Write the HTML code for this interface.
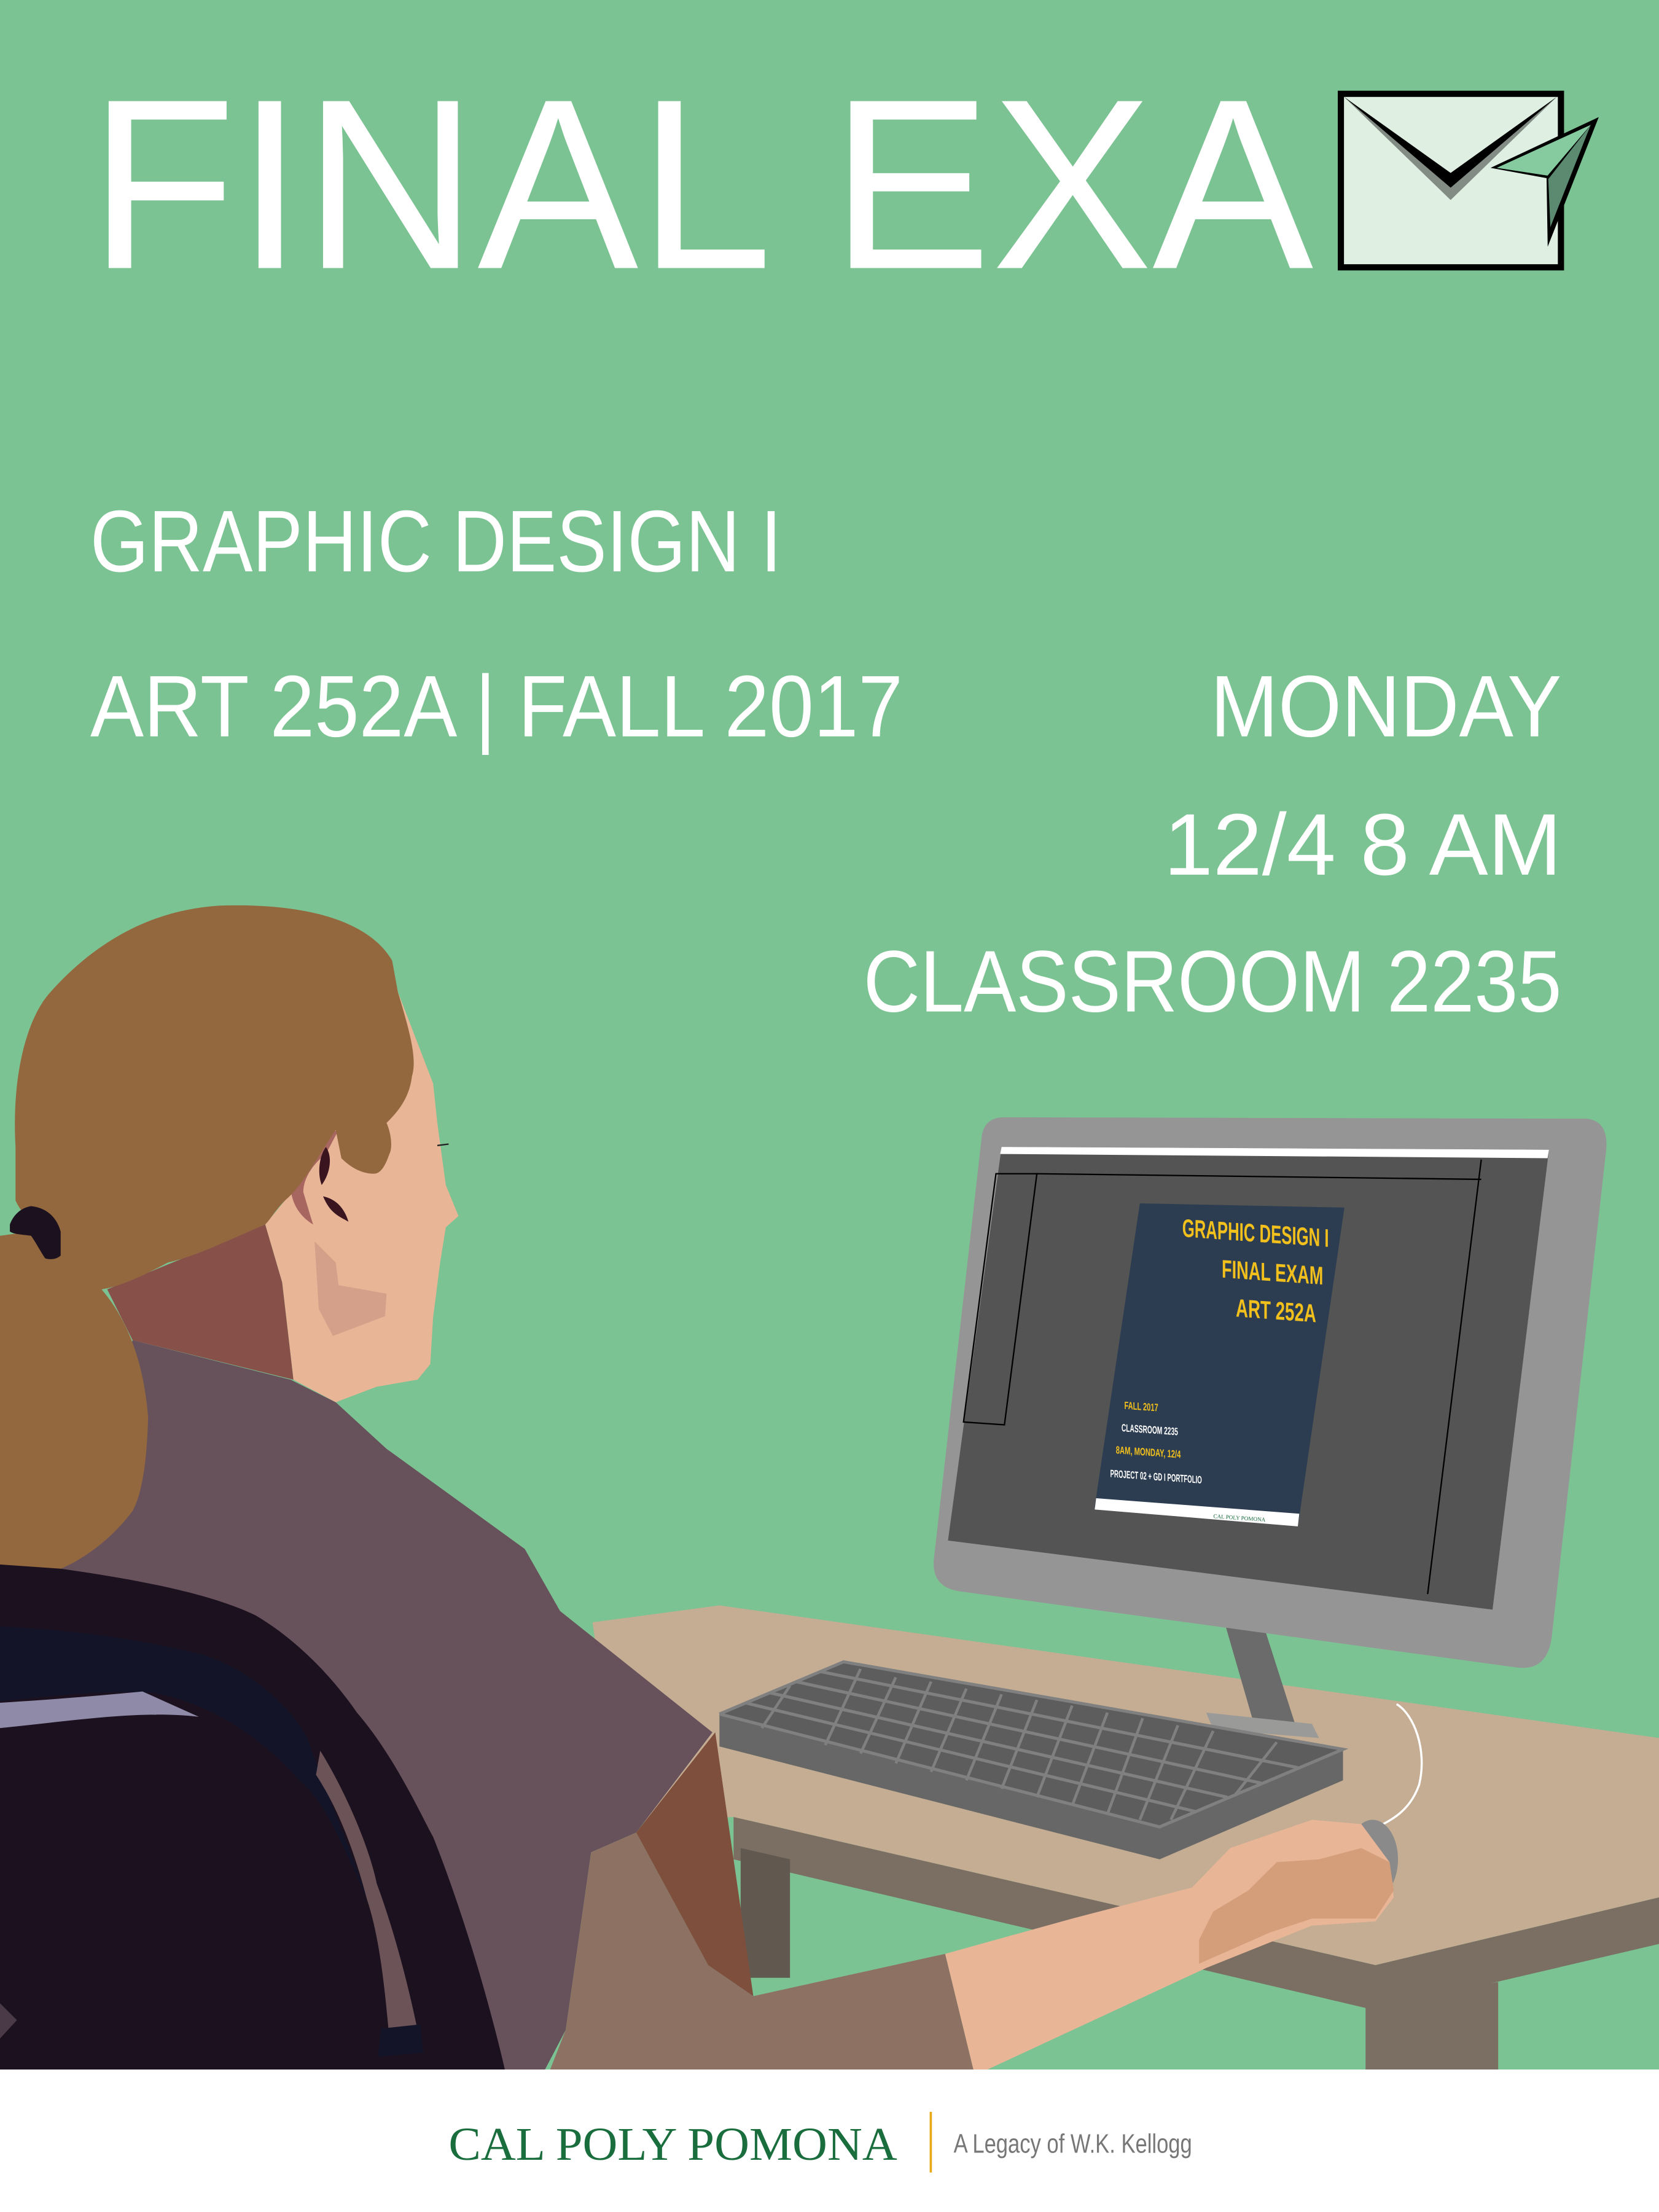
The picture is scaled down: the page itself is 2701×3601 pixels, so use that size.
<!DOCTYPE html>
<html><head><meta charset="utf-8"><style>
html,body{margin:0;padding:0;background:#7cc393;}
svg{display:block}
</style></head><body>
<svg width="2701" height="3601" viewBox="0 0 1176 1568" preserveAspectRatio="none" xmlns="http://www.w3.org/2000/svg">
<rect x="0" y="0" width="1176" height="1568" fill="#7cc393"/>

<!-- Headline -->
<text x="63" y="190" font-family="Liberation Sans, sans-serif" font-size="172" fill="#fff" textLength="868" lengthAdjust="spacingAndGlyphs">FINAL EXA</text>
<!-- Envelope -->
<rect x="950.5" y="66.5" width="156" height="123" fill="#dff0e2" stroke="#000" stroke-width="4.4"/>
<polygon points="952.6,68.5 1028.3,133.1 1103.7,68.5 1028.3,141.8" fill="#838c84"/>
<polygon points="952.6,68.5 1028.3,122.6 1103.7,68.5 1028.3,133.1" fill="#000"/>
<polygon points="1056.6,119 1133.3,83 1097.1,174.9 1096.3,126.3" fill="#000"/>
<polygon points="1061,119 1127.6,88.5 1097,124.5" fill="#86cba0"/>
<polygon points="1097.5,127 1127.6,88.5 1099,161" fill="#5b8a70"/>

<!-- Info text -->
<g font-family="Liberation Sans, sans-serif" fill="#fff" font-size="62">
<text x="64" y="405" textLength="490" lengthAdjust="spacingAndGlyphs">GRAPHIC DESIGN I</text>
<text x="64" y="522" textLength="576" lengthAdjust="spacingAndGlyphs">ART 252A | FALL 2017</text>
<text x="858" y="522" textLength="249" lengthAdjust="spacingAndGlyphs">MONDAY</text>
<text x="825" y="620" textLength="282" lengthAdjust="spacingAndGlyphs">12/4  8 AM</text>
<text x="612" y="717" textLength="495" lengthAdjust="spacingAndGlyphs">CLASSROOM 2235</text>
</g>

<!-- Desk -->
<polygon points="420,1150 510,1138 1176,1232 1176,1345 975,1393 520,1288 440,1292" fill="#c4ad93"/>
<polygon points="520,1288 975,1393 1176,1345 1176,1378 975,1425 520,1318" fill="#7b6e62"/>
<polygon points="525,1310 560,1318 560,1402 525,1402" fill="#615950"/>
<polygon points="968,1420 1062,1405 1062,1467 968,1467" fill="#7b6e62"/>

<!-- Monitor -->
<polygon points="868,1150 895,1150 918,1222 890,1226" fill="#6a6b6a"/>
<path d="M712,792 L1125,793 Q1142,795 1138,820 L1100,1160 Q1097,1185 1075,1182 L680,1128 Q660,1125 662,1105 L696,805 Q698,792 712,792 Z" fill="#959595"/>
<polygon points="710,813 1098,815 1058,1141 672,1092" fill="#535453"/>
<polygon points="710,813 1098,815 1097,821 709,818" fill="#fff"/>
<polyline points="735,832 1050,836" fill="none" stroke="#000" stroke-width="1"/>
<polyline points="1050,822 1012,1130" fill="none" stroke="#000" stroke-width="1"/>
<polygon points="706,832 735,832 712,1010 683,1008" fill="none" stroke="#000" stroke-width="1"/>
<!-- mini poster -->
<polygon points="808,853 953,856 920,1082 776,1068" fill="#2d3d51"/>
<polygon points="777,1062 921,1073 920,1082 776,1070" fill="#fff"/>
<g font-family="Liberation Sans Narrow, Liberation Sans, sans-serif" font-weight="bold" transform="skewY(4) translate(0,-62)">
<text x="942" y="880" font-size="18" fill="#f2c01c" text-anchor="end" textLength="104" lengthAdjust="spacingAndGlyphs">GRAPHIC DESIGN I</text>
<text x="938" y="907" font-size="18" fill="#f2c01c" text-anchor="end" textLength="72" lengthAdjust="spacingAndGlyphs">FINAL EXAM</text>
<text x="933" y="934" font-size="18" fill="#f2c01c" text-anchor="end" textLength="57" lengthAdjust="spacingAndGlyphs">ART 252A</text>
<text x="797" y="1005" font-size="7.5" fill="#f2c01c" textLength="24" lengthAdjust="spacingAndGlyphs">FALL 2017</text>
<text x="795" y="1021" font-size="7.5" fill="#fff" textLength="40" lengthAdjust="spacingAndGlyphs">CLASSROOM 2235</text>
<text x="791" y="1037" font-size="7.5" fill="#f2c01c" textLength="46" lengthAdjust="spacingAndGlyphs">8AM, MONDAY, 12/4</text>
<text x="787" y="1054" font-size="7.5" fill="#fff" textLength="65" lengthAdjust="spacingAndGlyphs">PROJECT 02 + GD I PORTFOLIO</text>
</g>
<text x="860" y="1076" font-family="Liberation Serif, serif" font-size="4" fill="#1a6e3e" transform="rotate(4 860 1076)">CAL POLY POMONA</text>

<!-- Keyboard -->
<polygon points="855,1214 930,1222 935,1232 860,1226" fill="#9a9a99"/>
<polygon points="510,1215 822,1295 952,1240 952,1262 822,1318 510,1238" fill="#666766"/>
<polygon points="510,1215 598,1178 952,1240 822,1295" fill="#5c5d5c"/>
<g stroke="#7f807f" stroke-width="2.2" fill="none">
<polyline points="510,1215 598,1178 952,1240 822,1295 510,1215"/>
<line x1="528" y1="1207" x2="847" y2="1284"/>
<line x1="546" y1="1200" x2="870" y2="1274"/>
<line x1="564" y1="1192" x2="894" y2="1264"/>
<line x1="582" y1="1185" x2="920" y2="1253"/>
</g>
<g stroke="#7f807f" stroke-width="2" fill="none">
<line x1="560" y1="1195" x2="540" y2="1225"/>
<line x1="610" y1="1183" x2="585" y2="1237"/>
<line x1="660" y1="1192" x2="635" y2="1250"/>
<line x1="710" y1="1201" x2="685" y2="1262"/>
<line x1="760" y1="1209" x2="735" y2="1274"/>
<line x1="810" y1="1218" x2="785" y2="1286"/>
<line x1="860" y1="1227" x2="830" y2="1290"/>
<line x1="905" y1="1235" x2="875" y2="1273"/>
<line x1="635" y1="1189" x2="610" y2="1243"/>
<line x1="685" y1="1197" x2="660" y2="1256"/>
<line x1="735" y1="1205" x2="710" y2="1268"/>
<line x1="785" y1="1214" x2="760" y2="1280"/>
<line x1="835" y1="1223" x2="808" y2="1290"/>
</g>
<!-- mouse & cord -->
<path d="M990,1208 C1002,1215 1012,1240 1006,1265 C998,1288 980,1292 972,1298" fill="none" stroke="#fff" stroke-width="1.5"/>
<ellipse cx="973" cy="1318" rx="18" ry="28" fill="#8a8a8a"/>

<!-- Person: shirt -->
<polygon points="94,950 206,978 238,994 274,1027 372,1098 397,1142 505,1228 451,1299 419,1313 401,1439 379,1481 0,1481 0,1109 43,1112" fill="#67525c"/>
<!-- chair -->
<path d="M0,1104 L43,1112 C100,1120 150,1130 181,1145 C215,1165 240,1195 253,1214 C280,1245 300,1290 307,1302 C330,1360 350,1430 361,1481 L0,1481 Z" fill="#1c111f"/>
<path d="M0,1153 C50,1155 100,1162 144,1173 C180,1185 205,1210 217,1230 C235,1280 252,1320 260,1346 C240,1300 228,1275 213,1263 C180,1225 140,1205 108,1200 C70,1198 30,1203 0,1206 Z" fill="#141429"/>
<path d="M0,1207 C35,1205 70,1202 101,1199 L141,1217 C100,1212 50,1220 0,1225 Z" fill="#8f8aa8"/>
<path d="M227,1241 C245,1270 262,1310 267,1335 C280,1370 290,1410 296,1439 L276,1445 C272,1400 268,1370 260,1346 C248,1300 235,1275 224,1258 Z" fill="#6b5358"/>
<polygon points="270,1438 298,1435 300,1455 268,1458" fill="#141429"/>
<polygon points="0,1420 12,1432 0,1445" fill="#4a3a48"/>
<!-- sleeve -->
<path d="M419,1313 L451,1299 L502,1393 L534,1415 L670,1385 L690,1467 L390,1467 L401,1439 Z" fill="#8d7163"/>
<polygon points="451,1299 507,1228 534,1415 502,1393" fill="#7f4f3d"/>
<!-- arm -->
<path d="M670,1385 L760,1360 L845,1338 L872,1310 L930,1290 L965,1293 L985,1320 L988,1345 L975,1362 L930,1365 L855,1395 L700,1467 L690,1467 Z" fill="#e8b597"/>
<path d="M850,1392 L900,1370 L930,1360 L975,1360 L988,1340 L985,1320 L965,1310 L935,1318 L905,1320 L885,1340 L860,1355 L850,1375 Z" fill="#d39e79"/>

<!-- neck & face -->
<polygon points="282,703 307,768 310,796 316,840 325,862 316,870 312,895 307,934 305,967 296,978 267,983 238,994 208,978 200,909 188,868 202,851" fill="#e8b597"/>
<polygon points="76,914 188,868 200,909 208,978 94,950" fill="#87514a"/>
<polygon points="223,880 238,895 240,911 274,917 273,933 236,947 226,928" fill="#d4a08a"/>
<path d="M206,840 C208,820 215,807 240,801 L231,818 C222,825 215,835 215,845 C218,855 220,862 222,868 C212,862 206,852 206,840 Z" fill="#a86660"/>
<path d="M231,813 C236,820 234,832 228,840 C225,832 226,820 231,813 Z" fill="#3a1520"/>
<path d="M229,848 C238,850 244,856 247,866 C240,862 234,860 229,848 Z" fill="#3a1520"/>
<line x1="310" y1="812" x2="318" y2="811" stroke="#222" stroke-width="1"/>
<!-- hair -->
<path d="M11,813 C8,760 20,720 36,703 C70,665 110,645 155,642 C210,640 260,650 278,681 L282,703 C290,730 296,750 292,763 C290,780 280,790 274,796 C278,805 278,815 276,818 C272,830 268,832 265,832 C255,832 247,826 242,821 L238,801 C225,820 215,840 202,851 C195,858 192,864 188,868 C160,880 140,890 119,895 C100,905 85,912 72,914 C55,905 45,895 36,884 C25,870 15,860 11,851 Z" fill="#93683f"/>
<path d="M0,876 L22,873 C45,885 62,900 72,914 C90,935 102,965 105,1005 C104,1040 100,1060 94,1071 C80,1090 60,1105 43,1112 L0,1109 Z" fill="#93683f"/>
<path d="M7,868 C10,860 16,856 22,855 C32,856 40,862 43,873 L43,890 C40,893 35,893 32,892 C28,886 25,880 22,876 C15,875 10,875 7,873 Z" fill="#1c111f"/>

<!-- Footer -->
<rect x="0" y="1467" width="1176" height="101" fill="#fff"/>
<text x="318" y="1531" font-family="Liberation Serif, serif" font-size="33" fill="#1a6e3e" textLength="318" lengthAdjust="spacingAndGlyphs">CAL POLY POMONA</text>
<rect x="659" y="1497" width="1.6" height="43" fill="#e8a817"/>
<text x="676" y="1526" font-family="Liberation Sans Narrow, Liberation Sans, sans-serif" font-size="19" fill="#777" textLength="169" lengthAdjust="spacingAndGlyphs">A Legacy of W.K. Kellogg</text>
</svg>
</body></html>
